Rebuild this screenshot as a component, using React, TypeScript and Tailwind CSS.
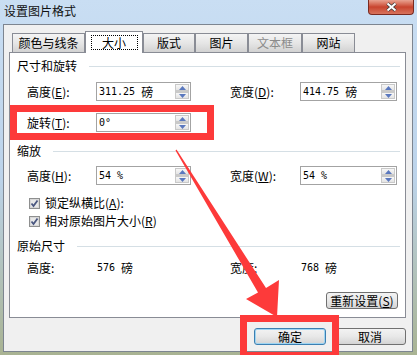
import type { ReactNode } from 'react';

const cjk = "font-['Noto_Sans_CJK_SC',sans-serif]";
const mono = "font-['DejaVu_Sans_Mono','Noto_Sans_CJK_SC',monospace]";

function Key({ k }: { k: string }) {
  return (
    <>
      (<span className="underline">{k}</span>):
    </>
  );
}

function Spinner() {
  return (
    <div className="flex w-[15px] flex-col py-px pr-px">
      <div className="flex flex-1 items-center justify-center border border-[#c9c9c9] bg-gradient-to-b from-[#f7f7f7] to-[#e4e4e4]">
        <svg width="7" height="4" viewBox="0 0 7 4">
          <path d="M0 4 L3.5 0 L7 4 Z" fill="#5a78be" />
        </svg>
      </div>
      <div className="flex flex-1 items-center justify-center border border-t-2 border-[#c9c9c9] bg-gradient-to-b from-[#f7f7f7] to-[#e4e4e4]">
        <svg width="7" height="4" viewBox="0 0 7 4">
          <path d="M0 0 L3.5 4 L7 0 Z" fill="#5a78be" />
        </svg>
      </div>
    </div>
  );
}

function Field({ value, unit, width }: { value: string; unit?: string; width: string }) {
  return (
    <div className={`flex h-[19px] border border-[#a3a3a3] bg-white ${width}`}>
      <div className="flex flex-1 items-center gap-[6px] pl-[2px]">
        <span className={`${mono} text-[10px] leading-none`}>{value}</span>
        {unit ? <span className="text-[12px] leading-none">{unit}</span> : null}
      </div>
      <Spinner />
    </div>
  );
}

function GroupTitle({ children }: { children: ReactNode }) {
  return (
    <div className="flex h-[18px] items-center pl-[7px] pr-[5px]">
      <span className="leading-none">{children}</span>
      <div className="ml-[12px] h-px flex-1 bg-[#d5dfe5]" />
    </div>
  );
}

function Check({ children }: { children: ReactNode }) {
  return (
    <div className="flex h-[16px] items-center pl-[19px]">
      <svg width="11" height="11" viewBox="0 0 11 11">
        <rect x="0.5" y="0.5" width="10" height="10" fill="#f1f1f1" stroke="#8e8f8f" />
        <rect x="1.5" y="1.5" width="8" height="8" fill="#e8e8e8" stroke="#d8d8d8" />
        <path d="M2.5 5.5 L4.5 8 L8.5 2.5" fill="none" stroke="#4a5780" strokeWidth="1.8" />
      </svg>
      <span className="ml-[5px] leading-none">{children}</span>
    </div>
  );
}

function Tab({ label, width, muted }: { label: string; width: string; muted?: boolean }) {
  return (
    <div
      className={`flex h-[19px] items-center justify-center border border-b-0 border-[#898c95] bg-gradient-to-b from-[#f4f4f4] via-[#e6e6e6] to-[#d2d2d2] ${width} ${
        muted ? 'text-[#8b8b8b]' : 'text-black'
      }`}
    >
      <span className="leading-none">{label}</span>
    </div>
  );
}

function WinButton({ children, focused, width }: { children: ReactNode; focused?: boolean; width: string }) {
  return (
    <div
      className={`flex h-[17px] items-center justify-center rounded-[3px] border bg-gradient-to-b from-[#f3f3f3] via-[#e8e8e8] to-[#d4d4d4] ${width} ${
        focused ? 'border-[#3c7fb1] shadow-[inset_0_0_0_1px_#9fd5f2]' : 'border-[#707070]'
      }`}
    >
      <span className="leading-none">{children}</span>
    </div>
  );
}

export default function App() {
  return (
    <div className={`relative h-[355px] w-[417px] overflow-hidden bg-gradient-to-b from-[#c9def3] via-[#bcd3ea] to-[#a9b392] text-[12px] text-black ${cjk}`}>
      <div className="flex h-[24px] items-start">
        <span className="pl-[4px] pt-[3px] text-[12px] leading-[16px] text-[#111]">设置图片格式</span>
        <div className="ml-auto mr-[3px] flex h-[15px] w-[46px] items-center justify-center rounded-b-[4px] border border-t-0 border-[#7a2a20] bg-gradient-to-b from-[#e8a291] via-[#c8432e] to-[#d7735c]">
          <svg width="13" height="10" viewBox="0 0 13 10">
            <path d="M2.5 1.5 L10.5 8.5 M10.5 1.5 L2.5 8.5" stroke="#3a3a3a" strokeWidth="3.6" />
            <path d="M2.5 1.5 L10.5 8.5 M10.5 1.5 L2.5 8.5" stroke="#ffffff" strokeWidth="2" />
          </svg>
        </div>
      </div>

      <div className="flex">
        <div className="w-[3px]" />
        <div className="flex h-[328px] w-[410px] flex-col border border-[#7d8590] bg-[#f0f0f0]">
          <div className="ml-[8px] mt-[6px] flex h-[21px] items-end">
            <Tab label="颜色与线条" width="w-[73px]" />
            <div className="relative z-10 -mb-px flex h-[22px] w-[58px] items-center justify-center border border-b-0 border-[#898c95] bg-white">
              <div className="flex h-[15px] w-[47px] items-center justify-center border border-dotted border-black">
                <span className="leading-none">大小</span>
              </div>
            </div>
            <Tab label="版式" width="w-[52px]" />
            <Tab label="图片" width="w-[53px]" />
            <Tab label="文本框" width="w-[54px]" muted />
            <Tab label="网站" width="w-[53px]" />
          </div>

          <div className="ml-[5px] flex h-[266px] w-[397px] flex-col border border-[#898c95] bg-white">
            <div className="mt-[4px]">
              <GroupTitle>尺寸和旋转</GroupTitle>
            </div>
            <div className="mt-[7px] flex items-center pl-[17px]">
              <span className="w-[69px] leading-none">
                高度<Key k="E" />
              </span>
              <Field value="311.25" unit="磅" width="w-[95px]" />
              <span className="ml-[39px] w-[70px] leading-none">
                宽度<Key k="D" />
              </span>
              <Field value="414.75" unit="磅" width="w-[97px]" />
            </div>
            <div className="mt-[12px] flex items-center pl-[17px]">
              <span className="w-[69px] leading-none">
                旋转<Key k="T" />
              </span>
              <Field value="0°" width="w-[95px]" />
            </div>

            <div className="mt-[10px]">
              <GroupTitle>缩放</GroupTitle>
            </div>
            <div className="mt-[6px] flex items-center pl-[17px]">
              <span className="w-[69px] leading-none">
                高度<Key k="H" />
              </span>
              <Field value="54 %" width="w-[95px]" />
              <span className="ml-[39px] w-[70px] leading-none">
                宽度<Key k="W" />
              </span>
              <Field value="54 %" width="w-[97px]" />
            </div>
            <div className="mt-[10px]">
              <Check>
                锁定纵横比<Key k="A" />
              </Check>
            </div>
            <div className="mt-[2px]">
              <Check>
                相对原始图片大小(<span className="underline">R</span>)
              </Check>
            </div>

            <div className="mt-[8px]">
              <GroupTitle>原始尺寸</GroupTitle>
            </div>
            <div className="mt-[5px] flex h-[16px] items-center pl-[17px]">
              <span className="w-[69px] leading-none">高度:</span>
              <span className="flex w-[95px] items-center gap-[6px] pl-px">
                <span className={`${mono} text-[10px] leading-none`}>576</span>
                <span className="leading-none">磅</span>
              </span>
              <span className="ml-[39px] w-[70px] leading-none">宽度:</span>
              <span className="flex items-center gap-[6px] pl-px">
                <span className={`${mono} text-[10px] leading-none`}>768</span>
                <span className="leading-none">磅</span>
              </span>
            </div>
            <div className="mr-[7px] mt-[16px] flex justify-end">
              <WinButton width="w-[72px]">
                重新设置(<span className="underline">S</span>)
              </WinButton>
            </div>
          </div>

          <div className="mr-[6px] mt-[10px] flex justify-end gap-[8px]">
            <WinButton width="w-[72px]" focused>
              确定
            </WinButton>
            <WinButton width="w-[72px]">取消</WinButton>
          </div>
        </div>
      </div>

      <div className="pointer-events-none absolute left-[10px] top-[105px] h-[35px] w-[204px] border-[7px] border-[#fd3a3a]" />
      <div className="pointer-events-none absolute left-[240px] top-[315px] h-[44px] w-[99px] border-[7px] border-[#fd3a3a]" />
      <svg className="pointer-events-none absolute left-0 top-0" width="417" height="355" viewBox="0 0 417 355">
        <polygon
          points="176.5,149.5 266,288 279,280 277,317 246,299 258,292.5 175.5,150.5"
          fill="#fd3a3a"
        />
      </svg>
    </div>
  );
}
